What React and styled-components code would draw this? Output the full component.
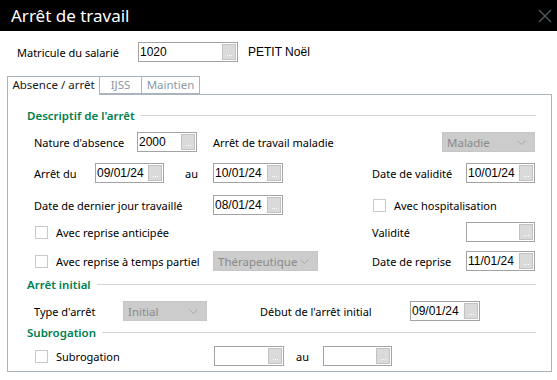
import styled, { createGlobalStyle } from 'styled-components';

const GlobalStyle = createGlobalStyle`
  html, body {
    margin: 0;
    padding: 0;
    background: #ffffff;
  }
  body {
    font-family: "Noto Sans", "Open Sans", sans-serif;
    font-size: 11px;
    color: #000;
  }
`;

const Window = styled.div`
  width: 557px;
  height: 380px;
  background: #fff;
  overflow: hidden;
`;

const TitleBar = styled.div`
  height: 31px;
  background: #000;
  color: #fff;
  display: flex;
  align-items: center;
  justify-content: space-between;
  padding: 0 5px 0 11px;
  font-size: 17px;
`;

const CloseButton = styled.div`
  width: 14px;
  height: 14px;
  display: flex;
`;

const TopRow = styled.div`
  display: flex;
  align-items: center;
  height: 20px;
  margin-top: 11px;
  padding-left: 17px;
`;

const Label = styled.div`
  width: ${(p) => (p.$w ? `${p.$w}px` : 'auto')};
  flex-shrink: 0;
  padding-left: ${(p) => p.$pl || 0}px;
  box-sizing: border-box;
  white-space: nowrap;
`;

const Employee = styled.div`
  margin-left: 10px;
  font-family: "Liberation Sans", Arial, sans-serif;
  font-size: 12px;
`;

const Tabs = styled.div`
  display: flex;
  margin-top: 14px;
  padding-left: 7px;
  position: relative;
  z-index: 1;
`;

const Tab = styled.div`
  width: ${(p) => p.$w}px;
  height: ${(p) => (p.$active ? 19 : 18)}px;
  box-sizing: border-box;
  border: 1px solid #a9b4be;
  border-bottom: ${(p) => (p.$active ? 'none' : '1px solid #a9b4be')};
  border-left: ${(p) => (p.$first ? '1px solid #a9b4be' : 'none')};
  background: #fff;
  color: ${(p) => (p.$active ? '#1a1a1a' : '#8c99a6')};
  text-align: center;
  line-height: 16px;
  font-size: 11.5px;
`;

const Panel = styled.div`
  margin-left: 7px;
  width: 545px;
  height: 278px;
  box-sizing: border-box;
  border: 1px solid #a9b4be;
  margin-top: -1px;
  padding: 13px 15px 0 19px;
`;

const SectionHeader = styled.div`
  display: flex;
  align-items: center;
  gap: 6px;
  height: 14px;
  margin-top: ${(p) => p.$mt || 0}px;
  color: #00804e;
  font-weight: 600;
  font-size: 11.5px;

  &::after {
    content: '';
    flex: 1;
    height: 1px;
    background: #cdd4da;
  }
`;

const Row = styled.div`
  display: flex;
  align-items: center;
  height: 20px;
  margin-top: ${(p) => p.$mt || 0}px;
  padding-left: 7px;
`;

const Spacer = styled.div`
  width: ${(p) => p.$w}px;
  flex-shrink: 0;
`;

const InputBox = styled.div`
  width: ${(p) => p.$w}px;
  height: 20px;
  flex-shrink: 0;
  box-sizing: border-box;
  border: 1px solid #a3a3a3;
  background: #fff;
  display: flex;
  align-items: stretch;
`;

const InputValue = styled.div`
  flex: 1;
  padding-left: 1px;
  font-family: "Liberation Sans", Arial, sans-serif;
  font-size: 12px;
  line-height: 18px;
  overflow: hidden;
`;

const DotsButton = styled.div`
  width: 14px;
  margin: 1px;
  box-sizing: border-box;
  border: 1px solid #c2c2c2;
  background: #dadada;
  display: flex;
  align-items: flex-end;
  justify-content: center;
  gap: 1px;
  padding-bottom: 3px;
`;

const Dot = styled.span`
  width: 1px;
  height: 1px;
  background: #ffffff;
`;

const SelectBox = styled.div`
  width: ${(p) => p.$w}px;
  height: 20px;
  flex-shrink: 0;
  box-sizing: border-box;
  background: #cccccc;
  border: 1px solid #c6c6c6;
  color: #8a8a8a;
  font-size: 11.5px;
  display: flex;
  align-items: center;
  justify-content: space-between;
  padding: 0 8px 0 4px;
`;

const CheckItem = styled.div`
  display: flex;
  align-items: center;
  width: ${(p) => (p.$w ? `${p.$w}px` : 'auto')};
  flex-shrink: 0;
  padding-left: 1px;
  box-sizing: border-box;
`;

const CheckBox = styled.div`
  width: 13px;
  height: 13px;
  box-sizing: border-box;
  border: 1px solid #c9c9c9;
  background: #fff;
  margin-right: 8px;
  flex-shrink: 0;
`;

const Chevron = () => (
  <svg width="9" height="5" viewBox="0 0 9 5">
    <path d="M0.5 0.5 L4.5 4.5 L8.5 0.5" fill="none" stroke="#a9a9a9" strokeWidth="1" />
  </svg>
);

const Lookup = ({ w, value }) => (
  <InputBox $w={w}>
    <InputValue>{value}</InputValue>
    <DotsButton>
      <Dot />
      <Dot />
      <Dot />
    </DotsButton>
  </InputBox>
);

const Select = ({ w, value }) => (
  <SelectBox $w={w}>
    <span>{value}</span>
    <Chevron />
  </SelectBox>
);

const Check = ({ w, label }) => (
  <CheckItem $w={w}>
    <CheckBox />
    <span>{label}</span>
  </CheckItem>
);

export default function App() {
  return (
    <>
      <GlobalStyle />
      <Window>
        <TitleBar>
          <span>Arrêt de travail</span>
          <CloseButton>
            <svg width="14" height="14" viewBox="0 0 14 14">
              <path d="M1 1 L13 13 M13 1 L1 13" stroke="#4f5d63" strokeWidth="1.4" />
            </svg>
          </CloseButton>
        </TitleBar>

        <TopRow>
          <Label $w={121}>Matricule du salarié</Label>
          <Lookup w={100} value="1020" />
          <Employee>PETIT Noël</Employee>
        </TopRow>

        <Tabs>
          <Tab $w={93} $active $first>Absence / arrêt</Tab>
          <Tab $w={42}>IJSS</Tab>
          <Tab $w={58}>Maintien</Tab>
        </Tabs>

        <Panel>
          <SectionHeader>Descriptif de l'arrêt</SectionHeader>

          <Row $mt={10}>
            <Label $w={103}>Nature d'absence</Label>
            <Lookup w={60} value="2000" />
            <Spacer $w={16} />
            <Label $w={229}>Arrêt de travail maladie</Label>
            <Select w={93} value="Maladie" />
          </Row>

          <Row $mt={11}>
            <Label $w={61}>Arrêt du</Label>
            <Lookup w={69} value="09/01/24" />
            <Label $w={49} $pl={21}>au</Label>
            <Lookup w={70} value="10/01/24" />
            <Spacer $w={89} />
            <Label $w={94}>Date de validité</Label>
            <Lookup w={69} value="10/01/24" />
          </Row>

          <Row $mt={12}>
            <Label $w={179}>Date de dernier jour travaillé</Label>
            <Lookup w={70} value="08/01/24" />
            <Spacer $w={89} />
            <Check label="Avec hospitalisation" />
          </Row>

          <Row $mt={7}>
            <Check w={338} label="Avec reprise anticipée" />
            <Label $w={94}>Validité</Label>
            <Lookup w={69} value="" />
          </Row>

          <Row $mt={9}>
            <Check w={179} label="Avec reprise à temps partiel" />
            <Select w={105} value="Thérapeutique" />
            <Spacer $w={54} />
            <Label $w={94}>Date de reprise</Label>
            <Lookup w={69} value="11/01/24" />
          </Row>

          <SectionHeader $mt={6}>Arrêt initial</SectionHeader>

          <Row $mt={10}>
            <Label $w={89}>Type d'arrêt</Label>
            <Select w={84} value="Initial" />
            <Spacer $w={53} />
            <Label $w={150}>Début de l'arrêt initial</Label>
            <Lookup w={70} value="09/01/24" />
          </Row>

          <SectionHeader $mt={4}>Subrogation</SectionHeader>

          <Row $mt={7}>
            <Check w={180} label="Subrogation" />
            <Lookup w={70} value="" />
            <Label $w={39} $pl={12}>au</Label>
            <Lookup w={69} value="" />
          </Row>
        </Panel>
      </Window>
    </>
  );
}
